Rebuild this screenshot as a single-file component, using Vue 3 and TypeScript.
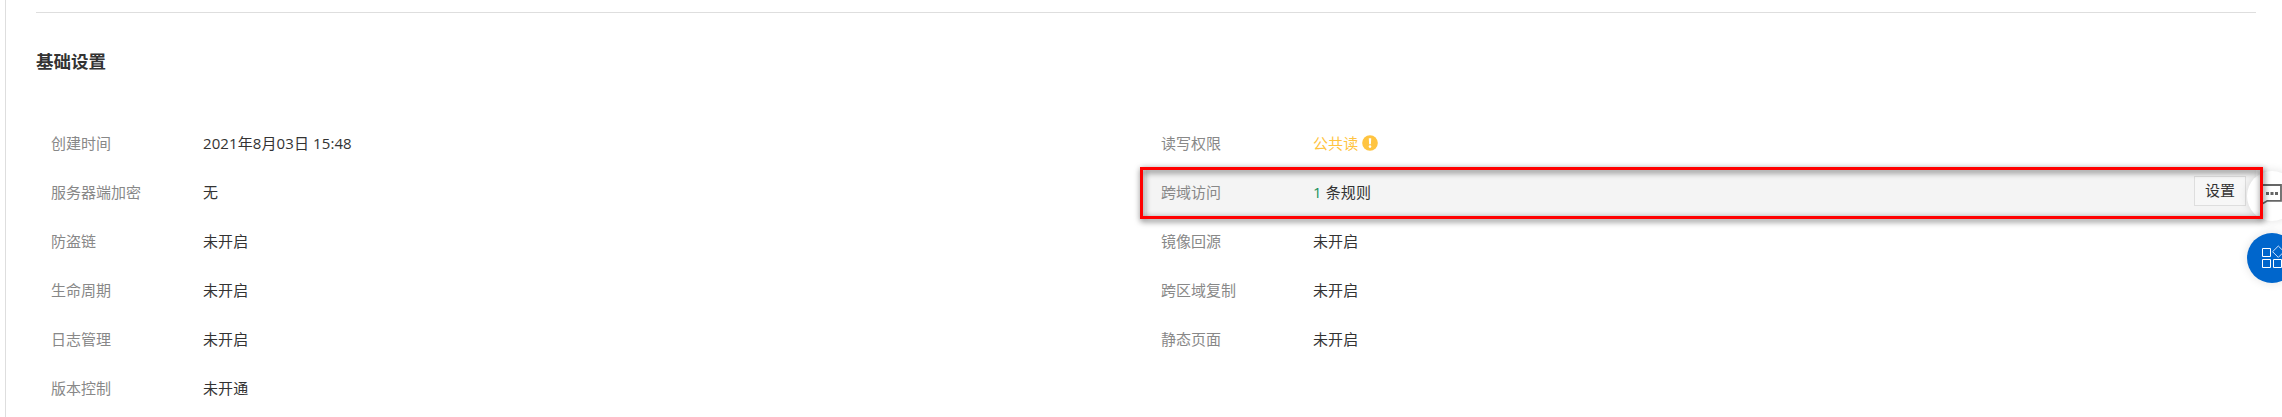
<script setup lang="ts">
interface Item {
  label: string
  value: string
  kind?: 'warn' | 'rule'
}

const left: Item[] = [
  { label: '创建时间', value: '2021年8月03日 15:48' },
  { label: '服务器端加密', value: '无' },
  { label: '防盗链', value: '未开启' },
  { label: '生命周期', value: '未开启' },
  { label: '日志管理', value: '未开启' },
  { label: '版本控制', value: '未开通' },
]

const right: Item[] = [
  { label: '读写权限', value: '公共读', kind: 'warn' },
  { label: '跨域访问', value: '条规则', kind: 'rule' },
  { label: '镜像回源', value: '未开启' },
  { label: '跨区域复制', value: '未开启' },
  { label: '静态页面', value: '未开启' },
]
</script>

<template>
  <div class="page">
    <main class="panel">
      <h2 class="title">基础设置</h2>
      <div class="columns">
        <section v-for="(col, c) in [left, right]" :key="c" class="column">
          <div v-for="item in col" :key="item.label" class="row" :class="item.kind">
            <span class="label">{{ item.label }}</span>
            <span class="value"><span v-if="item.kind === 'rule'" class="count">1</span>{{ item.value }}</span>
            <svg v-if="item.kind === 'warn'" class="warn-icon" width="16" height="16" viewBox="0 0 16 16">
              <circle cx="8" cy="8" r="7.8" fill="#ffc440" />
              <path d="M6.8 3.2h2.4L8.9 9.2H7.1z" fill="#fff" />
              <circle cx="8" cy="11.6" r="1.3" fill="#fff" />
            </svg>
            <button v-if="item.kind === 'rule'" class="set" type="button">设置</button>
          </div>
        </section>
      </div>
    </main>

    <aside class="floating">
      <div class="fab chat">
        <svg width="26" height="26" viewBox="0 0 26 26" fill="none">
          <path d="M3 2h19v15.8H8.3L3 21z" stroke="#666" stroke-width="1.8" />
          <path d="M7 9h3v3H7zM11.5 9h3v3h-3zM16 9h3v3h-3z" fill="#666" />
        </svg>
      </div>
      <div class="fab apps">
        <svg width="26" height="26" viewBox="0 0 26 26" fill="none" stroke="#fff" stroke-width="1">
          <path d="M3.5 3.5h8v8h-8zM3.5 14.5h8v8h-8zM14.5 14.5h8v8h-8z" />
          <path d="M19.3 1l5.7 5.7-5.7 5.7-5.7-5.7z" stroke="#cfe3ff" />
        </svg>
      </div>
    </aside>

    <div class="marker"></div>
  </div>
</template>

<style>
body {
  margin: 0;
  background: #fff;
}
</style>

<style scoped>
.page {
  position: relative;
  box-sizing: border-box;
  width: 2282px;
  height: 417px;
  padding-left: 5px;
  overflow: hidden;
  background: #fff;
  color: #333;
  font: 15px/20px "Open Sans", "Noto Sans CJK SC", sans-serif;
}
.panel {
  box-sizing: border-box;
  height: 417px;
  padding: 12px 26px 0 30px;
  border-left: 1px solid #dedede;
}
.title {
  margin: 0;
  padding-top: 36px;
  border-top: 1px solid #dedede;
  font-size: 17.5px;
  line-height: 24px;
  font-weight: 700;
}
.columns {
  display: flex;
  margin-top: 45px;
}
.column {
  width: 1110px;
}
.row {
  box-sizing: border-box;
  display: flex;
  align-items: center;
  height: 49px;
  padding: 0 10px 0 15px;
}
.row.rule {
  background: #f4f4f4;
}
.label {
  width: 152px;
  color: #888;
}
.value {
  letter-spacing: 0.1px;
}
.label,
.value {
  padding-top: 1px;
}
.warn .value {
  color: #ffc440;
}
.count {
  margin-right: 4px;
  color: #1a9159;
}
.warn-icon {
  margin-left: 4px;
}
.set {
  box-sizing: border-box;
  width: 52px;
  height: 30px;
  margin: 0 0 1px auto;
  padding: 0 0 2px;
  border: 1px solid #dedede;
  background: #f7f7f7;
  color: #333;
  font: inherit;
}
.floating {
  position: absolute;
  left: 2247px;
  top: 171px;
  display: grid;
  gap: 12px;
}
.fab {
  box-sizing: border-box;
  width: 50px;
  height: 50px;
  padding: 12px;
  border-radius: 50%;
  box-shadow: 0 0 10px rgba(0, 0, 0, 0.12);
}
.fab svg {
  display: block;
}
.chat {
  background: #fff;
}
.apps {
  background: #06c;
}
.marker {
  position: absolute;
  box-sizing: border-box;
  left: 1140px;
  top: 167px;
  width: 1123px;
  height: 52px;
  border: 3px solid #f00;
  filter: drop-shadow(1px 2px 3px rgba(0, 0, 0, 0.7));
}
</style>
